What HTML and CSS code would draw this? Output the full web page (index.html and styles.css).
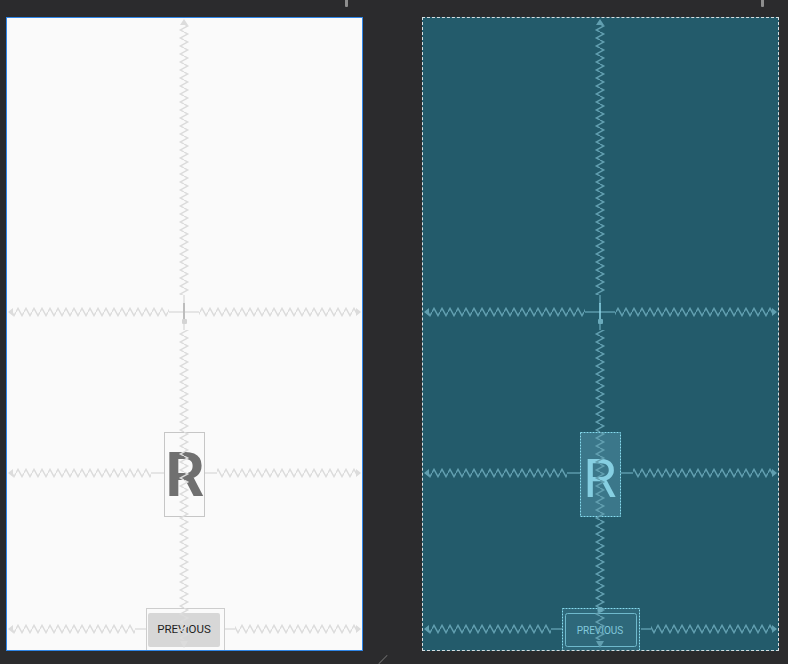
FILE: index.html
```html
<!DOCTYPE html>
<html>
<head>
<meta charset="utf-8">
<link rel="stylesheet" href="styles.css">
</head>
<body>
<div class="stage">
  <div class="panel design">
    <svg class="canvas" width="355" height="632" viewBox="7 18 355 632">
      <defs>
        <pattern id="zl" patternUnits="userSpaceOnUse" width="8" height="10">
          <polyline points="0,5 2,1.3 6,8.7 8,5" fill="none" stroke="#dcdcdc" stroke-width="1.4"/>
        </pattern>
      </defs>
      <!-- R image -->
      <rect class="d-box" x="164.5" y="432.5" width="40" height="84"/>
      <text class="d-r" x="185" y="496">R</text>
      <!-- Previous button -->
      <rect class="d-frame" x="146.5" y="608.5" width="78" height="44"/>
      <rect class="d-btn" x="148" y="613" width="72" height="34" rx="2"/>
      <text class="d-btn-text" x="184" y="633">PREVIOUS</text>

      <g class="d-spring">
        <!-- vertical top -->
        <polygon points="180,25 188,25 184,19"/>
        <g transform="translate(189,0) rotate(90)"><rect x="25" y="0" width="270" height="10" fill="url(#zl)"/></g>
        <line x1="184" y1="295" x2="184" y2="304"/>
        <!-- vertical bottom -->
        <line x1="184" y1="322" x2="184" y2="330"/>
        <g transform="translate(189,0) rotate(90)"><rect x="330" y="0" width="310" height="10" fill="url(#zl)"/></g>
        <polygon points="180,641 188,641 184,648"/>
        <!-- horizontal center -->
        <polygon points="13,308 13,316 8,312"/>
        <g transform="translate(0,307)"><rect x="13" y="0" width="156" height="10" fill="url(#zl)"/></g>
        <line x1="169" y1="312" x2="199" y2="312"/>
        <g transform="translate(0,307)"><rect x="199" y="0" width="157" height="10" fill="url(#zl)"/></g>
        <polygon points="356,308 356,316 361,312"/>
        <!-- horizontal R -->
        <polygon points="13,469 13,477 8,473"/>
        <g transform="translate(0,468)"><rect x="13" y="0" width="138" height="10" fill="url(#zl)"/></g>
        <line x1="151" y1="473" x2="164" y2="473"/>
        <line x1="205" y1="473" x2="217" y2="473"/>
        <g transform="translate(0,468)"><rect x="217" y="0" width="139" height="10" fill="url(#zl)"/></g>
        <polygon points="356,469 356,477 361,473"/>
        <!-- horizontal previous -->
        <polygon points="13,625 13,633 8,629"/>
        <g transform="translate(0,624)"><rect x="13" y="0" width="122" height="10" fill="url(#zl)"/></g>
        <line x1="135" y1="629" x2="146" y2="629"/>
        <line x1="225" y1="629" x2="235" y2="629"/>
        <g transform="translate(0,624)"><rect x="235" y="0" width="121" height="10" fill="url(#zl)"/></g>
        <polygon points="356,625 356,633 361,629"/>
      </g>
      <line class="d-anchor" x1="184" y1="303" x2="184" y2="320"/>
      <rect class="d-dot" x="182" y="319" width="5" height="5" rx="1"/>
    </svg>
  </div>

  <div class="panel blueprint">
    <svg class="canvas" width="355" height="632" viewBox="7 18 355 632">
      <defs>
        <pattern id="zb" patternUnits="userSpaceOnUse" width="8" height="10">
          <polyline points="0,5 2,1.3 6,8.7 8,5" fill="none" stroke="#619fb0" stroke-width="1.4"/>
        </pattern>
      </defs>
      <!-- R image -->
      <rect class="b-box" x="164.5" y="432.5" width="40" height="84"/>
      <text class="b-r" x="184" y="497">R</text>
      <!-- Previous button -->
      <rect class="b-frame" x="146.5" y="608.5" width="77" height="42"/>
      <rect class="b-btn" x="149.5" y="613.5" width="71" height="33" rx="2"/>
      <text class="b-btn-text" x="184" y="634">PREVIOUS</text>

      <g class="b-spring">
        <polygon points="180,25 188,25 184,19"/>
        <g transform="translate(189,0) rotate(90)"><rect x="25" y="0" width="270" height="10" fill="url(#zb)"/></g>
        <line x1="184" y1="295" x2="184" y2="304"/>
        <line x1="184" y1="322" x2="184" y2="330"/>
        <g transform="translate(189,0) rotate(90)"><rect x="330" y="0" width="310" height="10" fill="url(#zb)"/></g>
        <polygon points="180,641 188,641 184,648"/>
        <polygon points="13,308 13,316 8,312"/>
        <g transform="translate(0,307)"><rect x="13" y="0" width="156" height="10" fill="url(#zb)"/></g>
        <line x1="169" y1="312" x2="199" y2="312"/>
        <g transform="translate(0,307)"><rect x="199" y="0" width="157" height="10" fill="url(#zb)"/></g>
        <polygon points="356,308 356,316 361,312"/>
        <polygon points="13,469 13,477 8,473"/>
        <g transform="translate(0,468)"><rect x="13" y="0" width="138" height="10" fill="url(#zb)"/></g>
        <line x1="151" y1="473" x2="164" y2="473"/>
        <line x1="205" y1="473" x2="217" y2="473"/>
        <g transform="translate(0,468)"><rect x="217" y="0" width="139" height="10" fill="url(#zb)"/></g>
        <polygon points="356,469 356,477 361,473"/>
        <polygon points="13,625 13,633 8,629"/>
        <g transform="translate(0,624)"><rect x="13" y="0" width="122" height="10" fill="url(#zb)"/></g>
        <line x1="135" y1="629" x2="146" y2="629"/>
        <line x1="225" y1="629" x2="235" y2="629"/>
        <g transform="translate(0,624)"><rect x="235" y="0" width="121" height="10" fill="url(#zb)"/></g>
        <polygon points="356,625 356,633 361,629"/>
      </g>
      <line class="b-anchor" x1="184" y1="303" x2="184" y2="319"/>
      <rect class="b-dot" x="182" y="319" width="5" height="5" rx="1"/>
      <rect class="b-dot" x="181.5" y="607" width="5" height="5" rx="1"/>
    </svg>
  </div>
</div>
<div class="tick tick-left"></div>
<div class="tick tick-right"></div>
<div class="corner"></div>
</body>
</html>
```

FILE: styles.css
```css
html, body {
  margin: 0;
  padding: 0;
}

body {
  background: #2b2b2d;
  width: 788px;
  height: 664px;
  overflow: hidden;
  position: relative;
  font-family: Roboto, "Liberation Sans", sans-serif;
}

.stage {
  display: flex;
  gap: 59px;
  padding: 17px 0 0 6px;
}

.panel {
  width: 357px;
  height: 634px;
  box-sizing: border-box;
}

.canvas {
  display: block;
}

.design {
  background: #fafafa;
  border: 1px solid #2f86e8;
}

.blueprint {
  background: #235b6b;
  border: 1px dashed #d7dfe2;
}

/* design view */
.d-spring polygon { fill: #dcdcdc; }
.d-spring line { stroke: #dcdcdc; stroke-width: 1.4; }
.d-anchor { stroke: #bdbdbd; stroke-width: 2; }
.d-dot { fill: #d4d4d4; }
.d-box { fill: none; stroke: #c6c6c6; stroke-width: 1; }
.d-r {
  font-family: Roboto, "Liberation Sans", sans-serif;
  font-weight: 700;
  font-size: 61px;
  fill: #707070;
  text-anchor: middle;
}
.d-frame { fill: none; stroke: #cdcdcd; stroke-width: 1; }
.d-btn { fill: #d7d7d7; }
.d-btn-text {
  font-family: Roboto, "Liberation Sans", sans-serif;
  font-weight: 400;
  font-size: 11.5px;
  fill: #1f1f1f;
  text-anchor: middle;
}

/* blueprint view */
.b-spring polygon { fill: #619fb0; }
.b-spring line { stroke: #619fb0; stroke-width: 1.4; }
.b-anchor { stroke: #8fd6e8; stroke-width: 1.5; }
.b-dot { fill: #6aaabb; }
.b-box {
  fill: rgba(130, 205, 230, 0.25);
  stroke: #86dbee;
  stroke-width: 1;
  stroke-dasharray: 2 1;
}
.b-r {
  font-family: Roboto, "Liberation Sans", sans-serif;
  font-weight: 400;
  font-size: 54px;
  fill: #86cfe2;
  text-anchor: middle;
}
.b-frame {
  fill: rgba(130, 205, 230, 0.12);
  stroke: #86dbee;
  stroke-width: 1;
  stroke-dasharray: 2 1;
}
.b-btn { fill: none; stroke: #6fb9cc; stroke-width: 1; }
.b-btn-text {
  font-family: Roboto, "Liberation Sans", sans-serif;
  font-weight: 400;
  font-size: 10px;
  fill: #82c9dc;
  text-anchor: middle;
}

/* decorations over the dark background */
.tick {
  position: absolute;
  top: 0;
  width: 3px;
  height: 7px;
  background: #8e8e8e;
  border-radius: 0 0 1px 1px;
}
.tick-left { left: 345px; }
.tick-right { left: 761px; }

.corner {
  position: absolute;
  left: 377px;
  top: 659px;
  width: 12px;
  height: 1px;
  background: #6e6e6e;
  transform: rotate(-45deg);
}
```
